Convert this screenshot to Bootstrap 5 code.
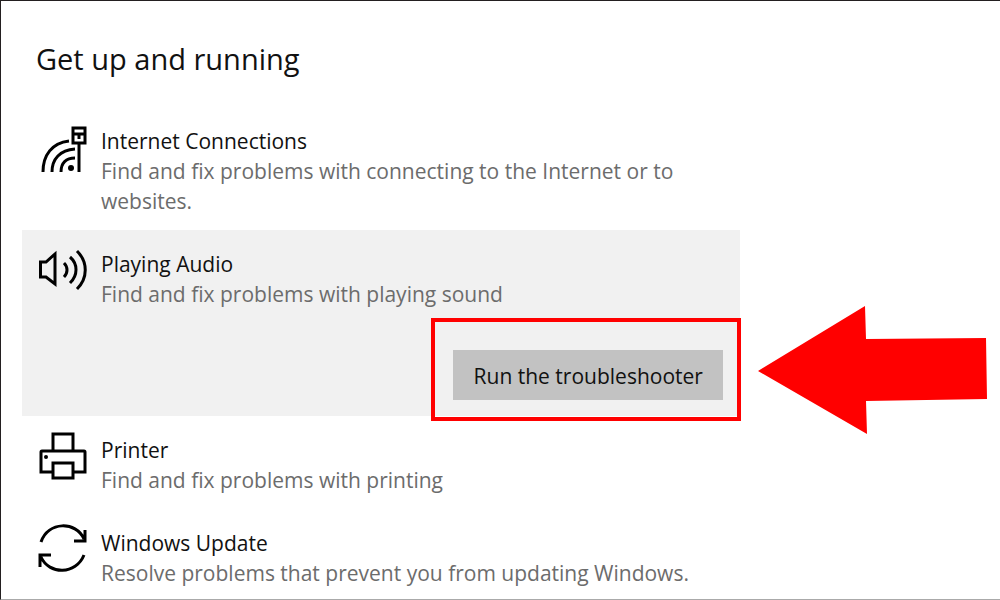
<!DOCTYPE html>
<html lang="en">
<head>
<meta charset="utf-8">
<meta name="viewport" content="width=device-width, initial-scale=1">
<title>Troubleshoot</title>
<link href="https://cdn.jsdelivr.net/npm/bootstrap@5.3.0/dist/css/bootstrap.min.css" rel="stylesheet">
<style>
  body { font-family: "Open Sans", "Noto Sans", sans-serif; font-size: 21px; line-height: 30px; color: #111; background: #fff; }
  .settings-page { border: 1px solid #231f20; border-right: 0; border-bottom-color: #aaa; }
  .settings-pane { width: 74%; padding: 38px 0 0 21px; }
  .pane-title { font-size: 29px; line-height: 40px; margin: 0 0 28px 14px; }
  .fixer { padding: 19px 17px 14px 15px; }
  .fixer.active-item { background: #f1f1f1; padding-bottom: 16px; }
  .fixer:last-child { padding-bottom: 0; }
  .fixer-icon { width: 52px; height: 52px; margin-right: 12px; overflow: visible; fill: none; stroke: #000; stroke-width: 3; }
  .fixer-name { font-size: 21px; line-height: 30px; margin: 0; font-weight: 400; }
  .fixer-text { color: #6c6c6c; margin: 0; }
  .run-wrap { margin-top: 41px; }
  .run-btn { width: 270px; height: 50px; font-size: 21px; line-height: 30px; background: #c2c2c2; color: #111; padding: 2px 0 0; }
  .run-btn:hover { background: #b4b4b4; }
  .run-frame { inset: -32px -18px -21px -22px; border: 4px solid #f00; pointer-events: none; }
  .arrow { left: 100%; top: 75px; width: 231px; height: 130px; margin-left: 17px; }
</style>
</head>
<body>
<div class="settings-page min-vh-100 overflow-hidden">
  <main class="settings-pane">
    <h1 class="pane-title fw-normal">Get up and running</h1>

    <section class="fixer d-flex align-items-start">
      <svg class="fixer-icon flex-shrink-0" viewBox="0 0 52 52" aria-hidden="true">
        <path d="M6 46C6 29 15 17 32 15M15 46C15 33 23 24 38 23M24 46C24 37 29 32 38 32"/>
        <circle cx="34" cy="42" r="3" fill="#000" stroke="none"/>
        <path d="M42 18V46"/>
        <path d="M36 2H48V17H36ZM36 8H48"/>
        <path d="M42 9V13"/>
      </svg>
      <div>
        <h2 class="fixer-name">Internet Connections</h2>
        <p class="fixer-text">Find and fix problems with connecting to the Internet or to websites.</p>
      </div>
    </section>

    <section class="fixer active-item position-relative">
      <div class="d-flex align-items-start">
        <svg class="fixer-icon flex-shrink-0" viewBox="0 0 52 52" aria-hidden="true">
          <path d="M3.500 13H9L18 5V35L9 28H3.500Z"/>
          <path d="M27 14C31 18 31 24 27 28M33 8C41 15 41 26 33 34M40 2C51 13 51 29 40 40"/>
        </svg>
        <div>
          <h2 class="fixer-name">Playing Audio</h2>
          <p class="fixer-text">Find and fix problems with playing sound</p>
        </div>
      </div>
      <div class="run-wrap d-flex justify-content-end">
        <div class="position-relative">
          <button type="button" class="run-btn btn border-0 rounded-0 d-block">Run the troubleshooter</button>
          <div class="run-frame position-absolute"></div>
        </div>
      </div>
      <svg class="arrow position-absolute" viewBox="0 0 231 130" aria-hidden="true">
        <path d="M1 66L108 1L109 34L229 33L230 94L109 96L110 129Z" fill="#f00"/>
      </svg>
    </section>

    <section class="fixer d-flex align-items-start">
      <svg class="fixer-icon flex-shrink-0" viewBox="0 0 52 52" aria-hidden="true">
        <path d="M16 16V-1H36V16M16 37H4V17Q4 16 5 16H47Q48 16 48 17V37H36M16 28H36V43H16Z"/>
        <circle cx="9" cy="22" r="2" fill="#000" stroke="none"/>
      </svg>
      <div>
        <h2 class="fixer-name">Printer</h2>
        <p class="fixer-text">Find and fix problems with printing</p>
      </div>
    </section>

    <section class="fixer d-flex align-items-start">
      <svg class="fixer-icon flex-shrink-0" viewBox="0 0 52 52" aria-hidden="true">
        <path d="M4 14C11-7 39-7 47 11M48 2V13H37M47 27C39 47 12 47 4 29M3 39V27H14"/>
      </svg>
      <div>
        <h2 class="fixer-name">Windows Update</h2>
        <p class="fixer-text">Resolve problems that prevent you from updating Windows.</p>
      </div>
    </section>
  </main>
</div>
<script src="https://cdn.jsdelivr.net/npm/bootstrap@5.3.0/dist/js/bootstrap.bundle.min.js"></script>
</body>
</html>
